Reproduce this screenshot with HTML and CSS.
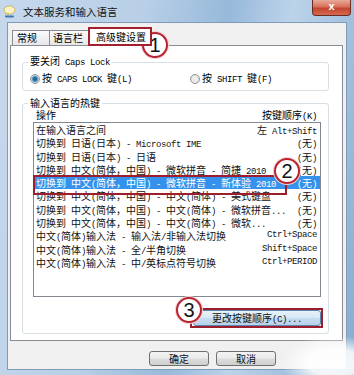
FILE: index.html
```html
<!DOCTYPE html>
<html lang="zh-CN">
<head>
<meta charset="utf-8">
<title>文本服务和输入语言</title>
<link rel="stylesheet" href="styles.css">
</head>
<body>
<div class="win">
  <div class="titlebar">
    <svg class="icon" width="13" height="13" viewBox="0 0 13 13">
      <ellipse cx="6.5" cy="5" rx="5.5" ry="4" fill="#fbf3c8" stroke="#c9a93a" stroke-width="0.8"/>
      <path d="M3 8.5 L2.5 11 L5.5 8.8 Z" fill="#fbf3c8" stroke="#c9a93a" stroke-width="0.6"/>
      <rect x="2" y="10.5" width="9" height="2" rx="1" fill="#3f79b8"/>
    </svg>
    <span class="title">文本服务和输入语言</span>
    <div class="close">x</div>
  </div>
  <div class="client">
    <div class="tabs">
      <div class="tab t1">常规</div>
      <div class="tab t2">语言栏</div>
      <div class="tab t3 sel">高级键设置</div>
    </div>
    <div class="panel">
      <fieldset class="grp g1">
        <legend>要关闭<span class="e"> Caps Lock</span></legend>
        <div class="radios">
          <div class="radio on"><i></i><span>按<span class="e"> CAPS LOCK </span>键<span class="e">(L)</span></span></div>
          <div class="radio"><i></i><span>按<span class="e"> SHIFT </span>键<span class="e">(F)</span></span></div>
        </div>
      </fieldset>
      <fieldset class="grp g2">
        <legend>输入语言的热键</legend>
        <div class="hdr"><span>操作</span><span>按键顺序<span class="e">(K)</span></span></div>
        <div class="list">
          <div class="row"><span>在输入语言之间</span><span>左<span class="e"> Alt+Shift</span></span></div>
          <div class="row"><span>切换到<span class="e"> </span>日语<span class="e">(</span>日本<span class="e">) - Microsoft IME</span></span><span><span class="e">(</span>无<span class="e">)</span></span></div>
          <div class="row"><span>切换到<span class="e"> </span>日语<span class="e">(</span>日本<span class="e">) - </span>日语</span><span><span class="e">(</span>无<span class="e">)</span></span></div>
          <div class="row"><span>切换到<span class="e"> </span>中文<span class="e">(</span>简体，中国<span class="e">) - </span>微软拼音<span class="e"> - </span>简捷<span class="e"> 2010</span></span><span><span class="e">(</span>无<span class="e">)</span></span></div>
          <div class="row sel"><span>切换到<span class="e"> </span>中文<span class="e">(</span>简体，中国<span class="e">) - </span>微软拼音<span class="e"> - </span>新体验<span class="e"> 2010</span></span><span><span class="e">(</span>无<span class="e">)</span></span></div>
          <div class="row"><span>切换到<span class="e"> </span>中文<span class="e">(</span>简体，中国<span class="e">) - </span>中文<span class="e">(</span>简体<span class="e">) - </span>美式键盘</span><span><span class="e">(</span>无<span class="e">)</span></span></div>
          <div class="row"><span>切换到<span class="e"> </span>中文<span class="e">(</span>简体，中国<span class="e">) - </span>中文<span class="e">(</span>简体<span class="e">) - </span>微软拼音<span class="e">...</span></span><span><span class="e">(</span>无<span class="e">)</span></span></div>
          <div class="row"><span>切换到<span class="e"> </span>中文<span class="e">(</span>简体，中国<span class="e">) - </span>中文<span class="e">(</span>简体<span class="e">) - </span>微软<span class="e">...</span></span><span><span class="e">(</span>无<span class="e">)</span></span></div>
          <div class="row"><span>中文<span class="e">(</span>简体<span class="e">)</span>输入法<span class="e"> - </span>输入法<span class="e">/</span>非输入法切换</span><span class="e">Ctrl+Space</span></div>
          <div class="row"><span>中文<span class="e">(</span>简体<span class="e">)</span>输入法<span class="e"> - </span>全<span class="e">/</span>半角切换</span><span class="e">Shift+Space</span></div>
          <div class="row"><span>中文<span class="e">(</span>简体<span class="e">)</span>输入法<span class="e"> - </span>中<span class="e">/</span>英标点符号切换</span><span class="e">Ctrl+PERIOD</span></div>
        </div>
        <div class="btnrow"><div class="btn chg">更改按键顺序<span class="e">(C)...</span></div></div>
      </fieldset>
    </div>
    <div class="foot">
      <div class="btn">确定</div>
      <div class="btn">取消</div>
    </div>
  </div>
  <div class="mark m1">1</div>
  <div class="mark m2">2</div>
  <div class="mark m3">3</div>
  <div class="glow"></div>
</div>
</body>
</html>
```
FILE: styles.css
```css
* { box-sizing: border-box; margin: 0; padding: 0; }
body {
  margin: 0;
  width: 354px;
  height: 375px;
  overflow: hidden;
  font-family: "Noto Sans CJK SC", "Liberation Sans", sans-serif;
  font-size: 10px;
  color: #000;
  background: #fff;
}
.e {
  font-family: "Liberation Mono", monospace;
  font-size: 9px;
  letter-spacing: -0.4px;
}
.win {
  position: relative;
  width: 354px;
  height: 375px;
  background: linear-gradient(100deg, #c6d8ec 0%, #b8cfe7 35%, #97b9da 55%, #bcd3ea 70%, #86acd0 100%);
  padding: 0 7px 5px 7px;
  display: flex;
  flex-direction: column;
}
.titlebar {
  height: 22px;
  margin: 0 -7px;
  padding-left: 3px;
  display: flex;
  align-items: center;
}
.icon { flex: none; }
.title {
  margin-left: 7px;
  font-size: 10.5px;
  color: #111;
}
.close {
  margin-left: auto;
  margin-right: 3px;
  align-self: flex-start;
  width: 39px;
  height: 16px;
  border: 1px solid #6b2b22;
  border-top: 0;
  border-radius: 0 0 4px 4px;
  background: linear-gradient(#eaa999 0%, #d7705c 45%, #c4452e 55%, #d5694f 100%);
  color: #fff;
  font-family: "Liberation Sans", sans-serif;
  font-weight: bold;
  font-size: 11px;
  line-height: 13px;
  text-align: center;
}
.client {
  flex: 1;
  background: #f0f0f0;
  border: 1px solid #7f9bb8;
  padding: 4px 2px 0 2px;
}
.tabs {
  display: flex;
  align-items: flex-end;
  height: 18px;
  padding-left: 2px;
  position: relative;
  z-index: 1;
}
.tab {
  height: 15px;
  border: 1px solid #898c95;
  border-bottom: 0;
  background: linear-gradient(#fbfbfb, #e7e7e7);
  line-height: 14px;
  white-space: nowrap;
}
.t1 { width: 38px; padding-left: 4px; }
.t2 { width: 41px; margin-left: -1px; padding-left: 3px; }
.t3 {
  width: 64px;
  margin-left: -2px;
  height: 19px;
  margin-bottom: -1px;
  padding-left: 7px;
  line-height: 17px;
  background: #fff;
  position: relative;
}
.t3::after {
  content: "";
  position: absolute;
  left: -1px;
  top: -1px;
  right: -1px;
  bottom: 0;
  border: 2px solid #a3202e;
}
.panel {
  width: 333px;
  height: 296px;
  border: 1px solid #898c95;
  background: #fff;
  padding: 9px 13px 0 11px;
}
.grp {
  border: 1px solid #d5dfe5;
  border-radius: 3px;
  padding: 0;
}
.grp legend {
  margin-left: 5px;
  padding: 0 2px;
  font-size: 10px;
  line-height: 12px;
}
.radios {
  display: grid;
  grid-template-columns: 160px auto;
  padding: 3px 0 4px 7px;
  line-height: 12px;
}
.radio {
  display: flex;
  align-items: center;
  gap: 2px;
}
.radio i {
  display: block;
  width: 10px;
  height: 10px;
  border-radius: 50%;
  border: 1px solid #939393;
  background: radial-gradient(circle, #f4f4f4 0, #dcdcdc 100%);
}
.radio.on i {
  background: radial-gradient(circle, #1d5a86 0, #2f76a8 2px, #7fb0d4 3px, #e6edf2 4px);
}
.g2 { margin-top: 6px; }
.hdr {
  display: flex;
  justify-content: space-between;
  height: 12px;
  line-height: 12px;
  padding: 0 11px 0 13px;
}
.list {
  margin: 1px 7px 0 10px;
  height: 175px;
  border: 1px solid #828790;
  background: #fff;
}
.row {
  display: flex;
  justify-content: space-between;
  height: 13.3px;
  line-height: 13px;
  padding: 0 3px 0 2px;
  white-space: nowrap;
  color: #111;
}
.row.sel {
  background: #3592ec;
  color: #fff;
  position: relative;
}
.row.sel::after {
  content: "";
  position: absolute;
  left: -1px;
  top: -1px;
  width: 250px;
  height: 16px;
  border: 2px solid #9c1d2b;
}
.btnrow {
  display: flex;
  justify-content: flex-end;
  padding: 13px 7px 7px 0;
}
.btn {
  width: 60px;
  height: 16px;
  border: 1px solid #707070;
  border-radius: 3px;
  background: linear-gradient(#f3f3f3 0%, #ebebeb 48%, #dddddd 52%, #cfcfcf 100%);
  text-align: center;
  line-height: 14px;
  color: #111;
}
.btn.chg {
  width: 128px;
  position: relative;
  border-color: #5a86ad;
  background: linear-gradient(#e6f1fa 0%, #d8e8f6 48%, #c6dcef 52%, #b8d2ea 100%);
}
.btn.chg::after {
  content: "";
  position: absolute;
  left: -4px;
  top: -3px;
  right: -3px;
  bottom: -3px;
  border: 2px solid #9c1d2b;
}
.foot {
  display: flex;
  gap: 7px;
  padding: 10px 0 0 139px;
}
.foot .btn { height: 15px; line-height: 13px; }
.mark {
  position: absolute;
  width: 26px;
  height: 26px;
  border-radius: 50%;
  border: 2px solid #b8232f;
  background: #fff;
  box-shadow: 0 0 0 1px #f4d0d3;
  font-family: "Liberation Sans", sans-serif;
  font-size: 20px;
  line-height: 22px;
  text-align: center;
  color: #111;
}
.m1 { left: 142px; top: 32px; }
.m2 { left: 274px; top: 158px; }
.m3 { left: 176px; top: 297px; }
.glow {
  position: absolute;
  left: 280px;
  top: 335px;
  width: 90px;
  height: 50px;
  background: radial-gradient(ellipse at 60% 55%, rgba(255,255,255,0.95) 0, rgba(255,255,255,0.85) 35%, rgba(255,255,255,0) 70%);
}
```
